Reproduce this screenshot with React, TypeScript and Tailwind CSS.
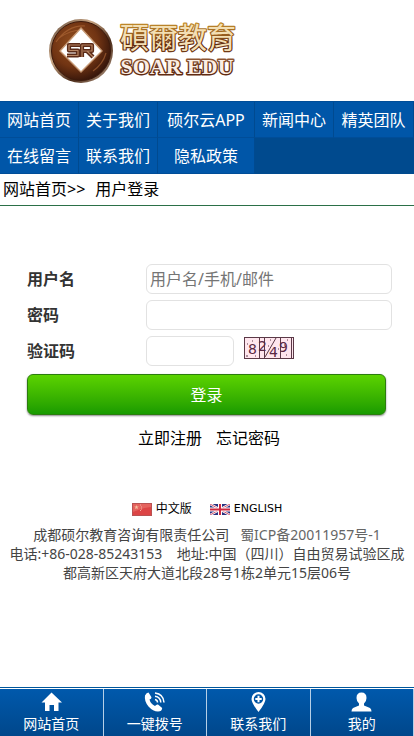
import type { ReactNode } from "react";

const navLinks = ["网站首页", "关于我们", "硕尔云APP", "新闻中心", "精英团队", "在线留言", "联系我们", "隐私政策"];

function Logo() {
  return (
    <svg className="block" width="192" height="84" viewBox="0 -18 192 84" role="img" aria-label="碩爾教育 SOAR EDU">
      <defs>
        <radialGradient id="disc" cx="0.4" cy="0.38" r="0.65">
          <stop offset="0" stopColor="#94501f" />
          <stop offset="0.6" stopColor="#713413" />
          <stop offset="1" stopColor="#35150a" />
        </radialGradient>
        <linearGradient id="rim" x1="0" y1="0" x2="1" y2="1">
          <stop offset="0" stopColor="#5a4436" />
          <stop offset="0.35" stopColor="#c9a684" />
          <stop offset="0.65" stopColor="#4a2a18" />
          <stop offset="1" stopColor="#c4aa93" />
        </linearGradient>
        <linearGradient id="gold" x1="0" y1="0" x2="0" y2="1">
          <stop offset="0.2" stopColor="#c08a2a" />
          <stop offset="0.5" stopColor="#93591f" />
          <stop offset="0.7" stopColor="#5f2a0d" />
          <stop offset="1" stopColor="#7d441b" />
        </linearGradient>
        <linearGradient id="copper" x1="0" y1="0" x2="0" y2="1">
          <stop offset="0" stopColor="#a56c43" />
          <stop offset="0.5" stopColor="#6b351b" />
          <stop offset="1" stopColor="#5a240d" />
        </linearGradient>
      </defs>
      <circle cx="33" cy="33" r="32" fill="url(#rim)" />
      <circle cx="33" cy="33" r="29.5" fill="url(#disc)" stroke="#3c1a0c" strokeWidth="1" />
      <path d="M8 24 Q20 7 37 8 M11 20 Q22 12 34 12 M45 53 Q55 46 58 35" fill="none" stroke="#b46d3b" strokeWidth="1.2" opacity="0.6" />
      <path d="M33 10 L54 33 L33 54 L12 33 Z" fill="#fff" stroke="#c69873" strokeWidth="1.4" />
      <g fill="none" strokeLinejoin="round">
        <path d="M32 27 H21 V32.5 H30 V37.5 H19 M34 39 V27 H44 V33 H35 M39 33 L45 39" stroke="#5b2b18" strokeWidth="4.2" />
        <path d="M32 27 H21 V32.5 H30 V37.5 H19 M34 39 V27 H44 V33 H35 M39 33 L45 39" stroke="#b78462" strokeWidth="1.2" />
      </g>
      <g textAnchor="middle" paintOrder="stroke" strokeLinejoin="round">
        <text x="130" y="31" fontSize="29" fontWeight="400" fontFamily="'Noto Sans CJK TC', sans-serif" fill="#f3dfb4" stroke="url(#gold)" strokeWidth="2.4">碩爾教育</text>
        <text x="129" y="56" fontSize="22" fontWeight="700" fontFamily="'Liberation Serif', serif" fill="#fbeee4" stroke="url(#copper)" strokeWidth="2.8">SOAR EDU</text>
      </g>
    </svg>
  );
}

function Captcha() {
  return (
    <svg className="block" width="50" height="22" viewBox="0 0 50 22" role="img" aria-label="验证码图片">
      <rect x="0.5" y="0.5" width="49" height="21" fill="#ffe6ee" stroke="#5b3947" />
      <path d="M15.5 0V22M20.5 0V22M36.5 0V22M47.5 0V22" fill="none" stroke="#5b3947" />
      <path d="M21 20 L32 1 M3 7h1 M2 19h2 M5 15h1 M8 4h1 M26 3h1 M24 9h1 M34 12h1 M42 18h1 M43 3h1 M40 8h1 M11 19h1 M30 16h1" stroke="#5b3947" fill="none" />
      <g fill="#5b2944" fontFamily="'DejaVu Sans', sans-serif" fontSize="14">
        <text x="4" y="17">8</text>
        <text x="14" y="14">2</text>
        <text x="25" y="20">4</text>
        <text x="35" y="15">9</text>
      </g>
    </svg>
  );
}

function ChinaFlag() {
  return (
    <svg width="20" height="13" viewBox="0 0 20 13" aria-hidden="true">
      <rect x="0.5" y="0.5" width="19" height="12" fill="#dc4545" stroke="#b95252" />
      <path d="M1 1H19V4Q10 5 1 9Z" fill="#ee8278" opacity="0.5" />
      <path d="M4.5 2l.6 1.600h1.700l-1.400 1 .5 1.600-1.400-1-1.400 1 .5-1.600-1.400-1h1.700z" fill="#f5c0a0" />
      <path d="M8 2h1M9 4h1M9 6h1M8 7.500h1" stroke="#f5b0a0" />
    </svg>
  );
}

function UkFlag() {
  return (
    <svg width="20" height="11" viewBox="0 0 20 11" aria-hidden="true">
      <rect width="20" height="11" fill="#2a3180" />
      <path d="M0 0L20 11M20 0L0 11" stroke="#fff" strokeWidth="2.4" />
      <path d="M0 0L20 11M20 0L0 11" stroke="#c8304a" strokeWidth="0.8" />
      <path d="M10 0V11M0 5.500H20" stroke="#fff" strokeWidth="4" />
      <path d="M10 0V11M0 5.500H20" stroke="#cf2940" strokeWidth="2" />
    </svg>
  );
}

const tabs: { label: string; icon: ReactNode }[] = [
  { label: "网站首页", icon: <path d="M10.5 0.500L21 10.500H17.500V19H13V13H8.500V19H4V10.500H0.500Z" /> },
  {
    label: "一键拨号",
    icon: (
      <>
        <path d="M1 3.500Q2.500 .5 4.500 .5L7.500 5.200Q7.500 7 5.500 7.600Q6.500 12 11 14Q12.500 12 14 12.500L18.200 16Q18 19.500 14 19.500Q9 19.500 4.500 14.500Q0 9 1 3.500Z" />
        <path d="M11 7.500Q13.500 8 13.500 10.500M11 4.200Q16.500 5 16.800 10.500M11 1Q19.500 2 20 10.500" fill="none" stroke="#fff" strokeWidth="1.5" />
      </>
    ),
  },
  {
    label: "联系我们",
    icon: (
      <>
        <path fillRule="evenodd" d="M10.5 0A7 7 0 0 1 17.500 7Q17.500 11 10.500 20Q3.500 11 3.500 7A7 7 0 0 1 10.500 0ZM10.500 2.300A4.700 4.700 0 1 0 10.500 11.700A4.700 4.700 0 1 0 10.500 2.300Z" />
        <path d="M10.5 3.800V10.200M7.300 7H13.700" stroke="#fff" strokeWidth="2" />
      </>
    ),
  },
  {
    label: "我的",
    icon: <path d="M10.5 .5Q15.500 .5 15.500 6Q15.500 9.500 13 11.500V13.500L19 16Q20.500 17 20.500 19.500H.5Q.5 17 2 16L8 13.500V11.500Q5.500 9.500 5.500 6Q5.500 .5 10.500 .5Z" />,
  },
];

const field = "h-[30px] rounded-md border border-[#e2e2e2] bg-white px-[3px] text-base text-[#333] outline-none placeholder:text-[#757575]";
const label = "w-[119px] shrink-0 text-base font-bold text-[#333]";

export default function App() {
  return (
    <div className="flex min-h-screen flex-col bg-white font-['Noto_Sans','Noto_Sans_CJK_SC',sans-serif] text-base text-black">
      <header className="pb-[17px] pl-12">
        <Logo />
      </header>

      <nav className="grid grid-cols-[79fr_79fr_97fr_79fr_80fr] border-t border-[#004d98] bg-[#004a8e]">
        {navLinks.map((text) => (
          <a
            key={text}
            href="#"
            className="flex h-9 items-center justify-center border-r border-b border-r-[#004a90] border-b-[#004d98] bg-[#0056a8] text-base whitespace-nowrap text-white"
          >
            {text}
          </a>
        ))}
      </nav>

      <div className="flex gap-1.5 border-b border-[#2b7048] pl-[3px] leading-[31px]">
        <span>
          <a href="#">网站首页</a>&gt;&gt;
        </span>
        <span className="pl-1">用户登录</span>
      </div>

      <form className="mt-[58px] pr-[22px] pl-[27px]" onSubmit={(e) => e.preventDefault()}>
        <div className="flex flex-col gap-1.5">
          <div className="flex items-center">
            <label htmlFor="user" className={label}>用户名</label>
            <input id="user" type="text" placeholder="用户名/手机/邮件" className={`${field} min-w-0 flex-1`} />
          </div>
          <div className="flex items-center">
            <label htmlFor="password" className={label}>密码</label>
            <input id="password" type="password" className={`${field} min-w-0 flex-1`} />
          </div>
          <div className="flex items-center">
            <label htmlFor="code" className={label}>验证码</label>
            <input id="code" type="text" className={`${field} mr-2.5 w-[88px]`} />
            <span className="pb-1.5">
              <Captcha />
            </span>
          </div>
        </div>
        <div className="pt-2 pr-1.5">
          <button
            type="submit"
            className="block h-[41px] w-full rounded-md border border-[#2b7d0d] bg-linear-to-b from-[#5bd300] to-[#189b00] text-base text-white shadow-[0_1px_2px_#8a8a8a]"
          >
            登录
          </button>
        </div>
      </form>

      <div className="mt-2 flex justify-center gap-3.5 pr-1 pl-2 leading-[30px]">
        <a href="#">立即注册</a>
        <a href="#">忘记密码</a>
      </div>

      <div className="mt-[46px] flex h-5 items-center justify-center gap-[18px] text-xs">
        <a href="#" className="flex items-center gap-1"><ChinaFlag />中文版</a>
        <a href="#" className="flex items-center gap-1 font-['DejaVu_Sans',sans-serif] text-[11px]"><UkFlag />ENGLISH</a>
      </div>

      <footer className="mt-1.5 px-1.5 pb-4 text-center text-sm leading-[19px] text-[#444]">
        <p>成都硕尔教育咨询有限责任公司 &nbsp;&nbsp;<a href="#" className="text-[#666]">蜀ICP备20011957号-1</a></p>
        <p>电话:+86-028-85243153 &nbsp;&nbsp; 地址:中国（四川）自由贸易试验区成都高新区天府大道北段28号1栋2单元15层06号</p>
      </footer>

      <nav className="mt-auto border-t border-[#00569b] pt-px">
        <div className="grid grid-cols-4 bg-linear-to-b from-[#0059ac] to-[#00478b]">
          {tabs.map((tab) => (
            <a key={tab.label} href="#" className="flex h-[47px] flex-col items-center border-r border-[#b5cfe7] pt-[3px] text-sm leading-5 text-white">
              <svg className="mb-0.5 shrink-0" width="21" height="20" viewBox="0 0 21 20" fill="#fff" aria-hidden="true">
                {tab.icon}
              </svg>
              {tab.label}
            </a>
          ))}
        </div>
      </nav>
    </div>
  );
}
